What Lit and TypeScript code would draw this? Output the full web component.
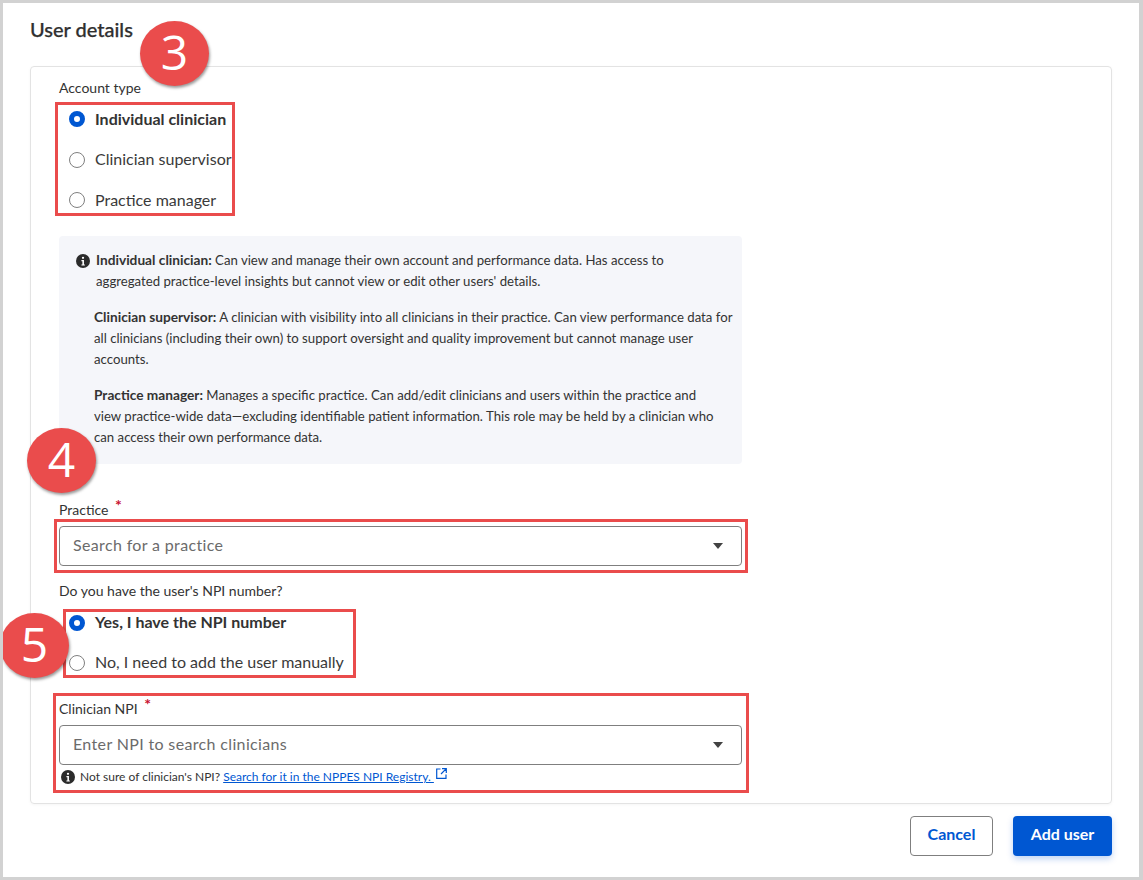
import { LitElement, html, css } from "lit";
import { customElement } from "lit/decorators.js";

const info = (s: number) => html`<svg class="info" width=${s} height=${s} viewBox="0 0 16 16"><circle cx="8" cy="8" r="8" fill="#2b2b2b"/><circle cx="8" cy="4.4" r="1.3" fill="#fff"/><path d="M6.2 6.9h2.9v5h1v1.3H6.2v-1.3h1.1V8.2H6.2z" fill="#fff"/></svg>`;
const caret = html`<svg class="caret" width="10" height="6" viewBox="0 0 10 6"><path d="M0 0h10L5 6z" fill="#424242"/></svg>`;

@customElement("app-root")
export class AppRoot extends LitElement {
  static styles = css`
    :host { display: block; width: 1143px; height: 880px; font-family: "Lato", "Liberation Sans", sans-serif; color: #333; }
    * { box-sizing: border-box; }
    .page { position: relative; width: 1143px; height: 880px; background: #fff; border: solid #d2d2d2; border-width: 3px 4px 3px 3px; padding: 14px 27px 0 27px; overflow: hidden; }
    h1 { margin: 0; font-size: 20px; line-height: 24px; font-weight: 500; color: #2f2f2f; height: 49px; -webkit-text-stroke: .25px #2f2f2f; }
    .card { width: 1082px; height: 738px; border: 1px solid #e3e3e3; border-radius: 4px; padding: 13px 28px 0; box-shadow: 0 1px 3px rgba(0,0,0,.04); }
    .label { font-size: 14px; line-height: 16px; color: #333; height: 16px; }
    .radios { display: flex; flex-direction: column; }
    .first-radios { margin-top: 2.5px; }
    .first-radios .radio { padding-bottom: 1px; }
    .first-radios .dot { margin-top: 2px; }
    .radio { display: flex; align-items: center; height: 40.5px; font-size: 16px; color: #3a3a3a; gap: 10px; padding-left: 10px; }
    .radio.on { font-weight: 700; color: #333; }
    .dot { width: 16px; height: 16px; border-radius: 50%; border: 1.7px solid #7f7f7f; flex: none; background: #fff; }
    .on .dot { border: 5px solid #0057d2; }
    .infobox { width: 683px; height: 228px; margin-top: 16px; background: #f5f6fa; border-radius: 4px; padding: 14px 10px 0 35px; font-size: 13.2px; line-height: 21px; color: #333; position: relative; }
    .infobox p { margin: 0 0 15px; white-space: nowrap; }
    .infobox b { font-size: 13.7px; line-height: 1; }
    .infobox .first { margin-left: 2px; }
    .infobox .info { position: absolute; left: 17px; top: 18px; }
    .field { display: flex; align-items: center; justify-content: space-between; width: 683px; height: 40px; border: 1px solid #7f7f7f; border-radius: 4px; padding: 0 18px 0 13px; font-size: 16px; color: #6b6b6b; letter-spacing: .35px; }
    .field span { padding-bottom: 4px; }
    .req { color: #c8102e; font-weight: 700; font-size: 16px; margin-left: 3px; vertical-align: 4px; line-height: 0; }
    .practice-label { margin-top: 38px; margin-bottom: 8px; }
    .q { margin-top: 17px; }
    .npi-label { margin-top: 19px; margin-bottom: 8px; }
    .second-radios { margin-top: 3px; }
    .second-radios .radio { height: 40px; padding-bottom: 2px; }
    .second-radios .dot { margin-top: 4px; }
    .help { display: flex; align-items: center; gap: 5px; font-size: 12px; line-height: 16px; margin-top: 3px; padding-left: 2px; color: #333; }
    .help a { color: #0057d2; text-decoration: underline; }
    .ext { vertical-align: 2px; margin-left: 2px; }
    .actions { display: flex; justify-content: flex-end; gap: 20px; width: 1082px; margin-top: 12px; }
    button { height: 40px; border-radius: 4px; font: 700 16px "Lato", "Liberation Sans", sans-serif; padding: 0 0 5px; }
    .cancel { width: 83px; background: #fff; color: #0057d2; border: 1px solid #7f7f7f; }
    .add { width: 99px; background: #0057d2; color: #fff; border: 0; box-shadow: 0 3px 6px rgba(0,87,210,.25); }
    .box { position: absolute; border: 3px solid #ea4c4c; pointer-events: none; }
    .badge { position: absolute; width: 69px; height: 65px; border-radius: 50%; background: #ea4c4c; color: #fff; font: 400 48px/61px "Open Sans", "Liberation Sans", sans-serif; text-align: center; box-shadow: 1px 2px 3px rgba(0,0,0,.4); }
    .b1 { left: 52px; top: 99px; width: 180px; height: 114px; }
    .b2 { left: 51px; top: 516px; width: 694px; height: 54px; }
    .b3 { left: 60px; top: 606px; width: 293px; height: 69px; }
    .b4 { left: 50px; top: 690px; width: 696px; height: 100px; }
    .n3 { left: 137px; top: 18px; }
    .n4 { left: 24px; top: 425px; }
    .n5 { left: -3px; top: 610px; }
  `;

  render() {
    return html`<div class="page">
      <h1>User details</h1>
      <div class="card">
        <div class="label">Account type</div>
        <div class="radios first-radios">
          <div class="radio on"><span class="dot"></span>Individual clinician</div>
          <div class="radio"><span class="dot"></span>Clinician supervisor</div>
          <div class="radio"><span class="dot"></span>Practice manager</div>
        </div>
        <div class="infobox">
          ${info(14)}
          <p class="first"><b>Individual clinician:</b> Can view and manage their own account and performance data. Has access to<br>aggregated practice-level insights but cannot view or edit other users' details.</p>
          <p><b>Clinician supervisor:</b> A clinician with visibility into all clinicians in their practice. Can view performance data for<br>all clinicians (including their own) to support oversight and quality improvement but cannot manage user<br>accounts.</p>
          <p><b>Practice manager:</b> Manages a specific practice. Can add/edit clinicians and users within the practice and<br>view practice-wide data—excluding identifiable patient information. This role may be held by a clinician who<br>can access their own performance data.</p>
        </div>
        <div class="label practice-label">Practice <span class="req">*</span></div>
        <div class="field"><span>Search for a practice</span>${caret}</div>
        <div class="label q">Do you have the user's NPI number?</div>
        <div class="radios second-radios">
          <div class="radio on"><span class="dot"></span>Yes, I have the NPI number</div>
          <div class="radio"><span class="dot"></span>No, I need to add the user manually</div>
        </div>
        <div class="label npi-label">Clinician NPI <span class="req">*</span></div>
        <div class="field"><span>Enter NPI to search clinicians</span>${caret}</div>
        <div class="help">${info(14)}<span>Not sure of clinician's NPI? <a>Search for it in the NPPES NPI Registry. </a><svg class="ext" width="11" height="11" viewBox="0 0 11 11" fill="none" stroke="#0057d2" stroke-width="1.2"><path d="M4.5 1H.7v9.3H10V6.5M6 .7h4.3V5M10.3.7 5 6"/></svg></span></div>
      </div>
      <div class="actions"><button class="cancel">Cancel</button><button class="add">Add user</button></div>
      <div class="box b1"></div><div class="box b2"></div><div class="box b3"></div><div class="box b4"></div>
      <div class="badge n3">3</div><div class="badge n4">4</div><div class="badge n5">5</div>
    </div>`;
  }
}
